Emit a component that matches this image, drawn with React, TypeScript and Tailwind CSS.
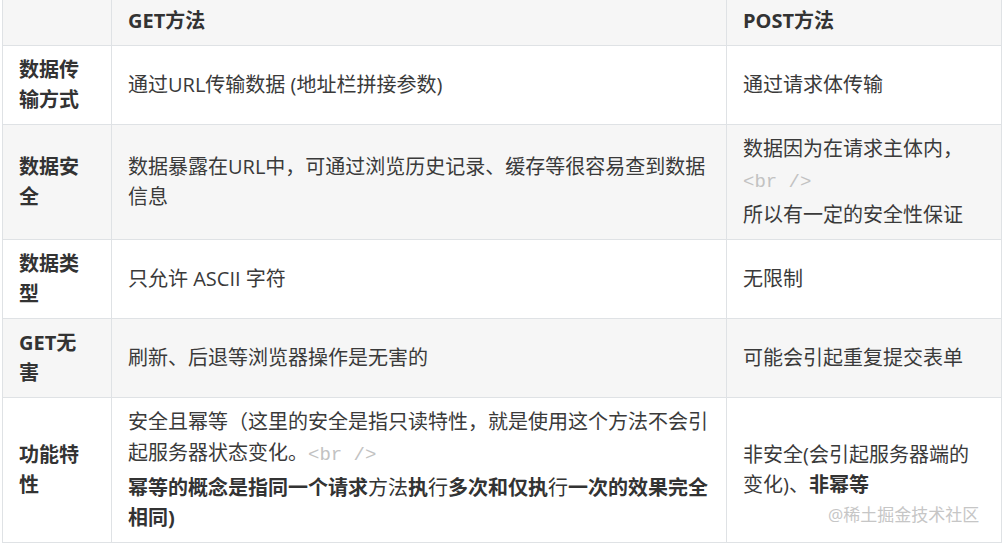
import React from "react";

const font = { fontFamily: '"Open Sans", "Noto Sans CJK SC", sans-serif' };

function Code() {
  return (
    <span className="inline-block leading-[36px] text-[19px] text-[#c2c2c2] font-normal [font-family:'Liberation_Mono',monospace]">
      {"<br />"}
    </span>
  );
}

function Cell({
  children,
  bg,
  head,
  bold,
}: {
  children: React.ReactNode;
  bg?: boolean;
  head?: boolean;
  bold?: boolean;
}) {
  return (
    <div
      className={
        "flex items-center border-r border-b border-[#dfe2e5] px-4 " +
        (head ? "pt-[6px] pb-[9px] " : "py-[9px] ") +
        (bg ? "bg-[#f6f6f6] " : "bg-white ") +
        (bold ? "font-bold text-[#333333] " : "text-[#3a3a3a] ")
      }
    >
      <div className="leading-[30px]">{children}</div>
    </div>
  );
}

export default function App() {
  return (
    <div className="w-[1005px] h-[543px] bg-white relative overflow-hidden" style={font}>
      <div className="ml-[2px] w-[1000px] grid grid-cols-[109px_615px_275px] border-l border-[#dfe2e5] text-[20px]">
        <Cell bg head>
          <span>&nbsp;</span>
        </Cell>
        <Cell bg head bold>GET方法</Cell>
        <Cell bg head bold>POST方法</Cell>

        <Cell bold>
          数据传
          <br />
          输方式
        </Cell>
        <Cell>通过URL传输数据 (地址栏拼接参数)</Cell>
        <Cell>通过请求体传输</Cell>

        <Cell bg bold>
          数据安
          <br />全
        </Cell>
        <Cell bg>
          <span className="whitespace-nowrap">数据暴露在URL中，可通过浏览历史记录、缓存等很容易查到数据</span>
          <br />
          信息
        </Cell>
        <Cell bg>
          数据因为在请求主体内，
          <br />
          <Code />
          <br />
          所以有一定的安全性保证
        </Cell>

        <Cell bold>
          数据类
          <br />型
        </Cell>
        <Cell>只允许 ASCII 字符</Cell>
        <Cell>无限制</Cell>

        <Cell bg bold>
          GET无
          <br />害
        </Cell>
        <Cell bg>刷新、后退等浏览器操作是无害的</Cell>
        <Cell bg>可能会引起重复提交表单</Cell>

        <Cell bold>
          功能特
          <br />性
        </Cell>
        <Cell>
          <span className="whitespace-nowrap">安全且幂等（这里的安全是指只读特性，就是使用这个方法不会引</span>
          <br />
          起服务器状态变化。<Code />
          <br />
          <span className="font-bold text-[#333333] whitespace-nowrap">
            幂等的概念是指同一个请求<span className="font-normal">方法</span>执<span className="font-normal">行</span>多次和仅执<span className="font-normal">行</span>一次的效果完全
          </span>
          <br />
          <span className="font-bold text-[#333333]">相同)</span>
        </Cell>
        <Cell>
          非安全(会引起服务器端的
          <br />
          变化)、<span className="font-bold text-[#333333]">非幂等</span>
        </Cell>
      </div>
      <div className="absolute left-[828px] top-[502px] text-[17px] leading-[26px] text-[#c6c6c6] whitespace-nowrap">
        @稀土掘金技术社区
      </div>
    </div>
  );
}
